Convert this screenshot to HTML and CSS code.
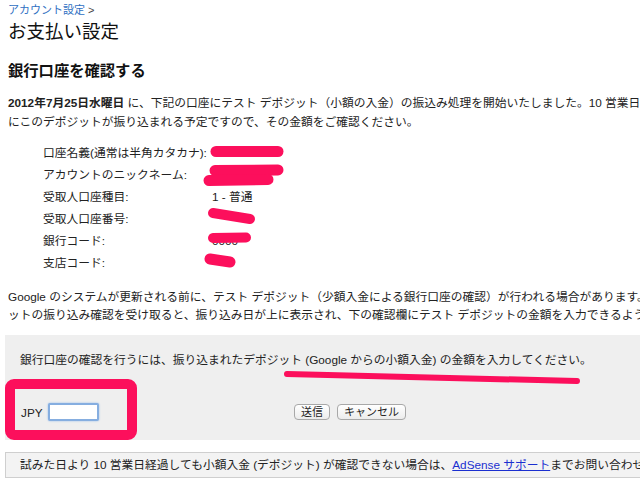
FILE: index.html
```html
<!DOCTYPE html>
<html lang="ja">
<head>
<meta charset="utf-8">
<title>お支払い設定</title>
<link rel="stylesheet" href="styles.css">
</head>
<body>
<div class="page">
  <div class="crumb"><a href="#" class="crumb-link">アカウント設定</a> &gt;</div>
  <h1 class="title">お支払い設定</h1>
  <h2 class="heading">銀行口座を確認する</h2>
  <p class="intro"><b>2012年7月25日水曜日</b> に、下記の口座にテスト デポジット（小額の入金）の振込み処理を開始いたしました。10 営業日以内<br>にこのデポジットが振り込まれる予定ですので、その金額をご確認ください。</p>
  <table class="details">
    <tr><td class="label">口座名義(通常は半角カタカナ):</td><td class="value"></td></tr>
    <tr><td class="label">アカウントのニックネーム:</td><td class="value"></td></tr>
    <tr><td class="label">受取人口座種目:</td><td class="value">1 - 普通</td></tr>
    <tr><td class="label">受取人口座番号:</td><td class="value"></td></tr>
    <tr><td class="label">銀行コード:</td><td class="value">0000</td></tr>
    <tr><td class="label">支店コード:</td><td class="value"></td></tr>
  </table>
  <p class="note">Google のシステムが更新される前に、テスト デポジット（少額入金による銀行口座の確認）が行われる場合があります。テスト デポジ<br>ットの振り込み確認を受け取ると、振り込み日が上に表示され、下の確認欄にテスト デポジットの金額を入力できるようになります。</p>
  <div class="verify">
    <div class="verify-text">銀行口座の確認を行うには、振り込まれたデポジット (Google からの小額入金) の金額を入力してください。</div>
    <div class="verify-row">
      <div class="amount">
        <span class="currency">JPY</span>
        <input class="amount-input" type="text">
      </div>
      <div class="actions">
        <button class="btn">送信</button>
        <button class="btn">キャンセル</button>
      </div>
    </div>
  </div>
  <div class="help">試みた日より 10 営業日経過しても小額入金 (デポジット) が確認できない場合は、<a href="#" class="help-link">AdSense サポート</a>までお問い合わせください。</div>
</div>
<svg class="marks" width="640" height="501" viewBox="0 0 640 501">
  <g stroke="#fc0f5c" stroke-linecap="round" fill="none">
    <line x1="216" y1="151.5" x2="278" y2="151.5" stroke-width="11"/>
    <line x1="215" y1="170.5" x2="278" y2="170" stroke-width="11"/>
    <line x1="209" y1="180.5" x2="268" y2="179.5" stroke-width="11"/>
    <line x1="213" y1="213" x2="250" y2="219" stroke-width="10"/>
    <line x1="213" y1="238" x2="246" y2="237.5" stroke-width="10"/>
    <line x1="210" y1="259" x2="230" y2="262" stroke-width="11"/>
    <line x1="287" y1="374" x2="577" y2="381" stroke-width="6"/>
    <rect x="10" y="384" width="122" height="51" rx="4" stroke-width="10"/>
  </g>
</svg>
</body>
</html>
```

FILE: styles.css
```css
html, body {
  margin: 0;
  padding: 0;
  overflow: hidden;
  background: #fff;
}
body {
  position: relative;
  width: 640px;
  height: 501px;
  font-family: "Liberation Sans", "Noto Sans CJK JP", sans-serif;
  color: #222;
  font-size: 11.75px;
}
.page {
  width: 900px;
  padding: 0 0 0 8px;
}
.crumb {
  height: 20px;
  line-height: 20px;
  font-size: 11px;
  color: #444;
}
.crumb-link {
  color: #2f6fc2;
  text-decoration: none;
}
.title {
  margin: 0;
  font-size: 18.5px;
  font-weight: normal;
  line-height: 24px;
  color: #111;
}
.heading {
  margin: 17px 0 0;
  font-size: 15.3px;
  font-weight: bold;
  line-height: 20px;
  color: #111;
}
.intro {
  margin: 12px 0 0;
  line-height: 19px;
}
.details {
  margin: 11px 0 0 35px;
  border-collapse: collapse;
}
.details td {
  padding: 0;
  height: 22px;
  line-height: 22px;
  vertical-align: middle;
}
.label {
  width: 169px;
}
.value {
  width: 120px;
}
.note {
  margin: 14px 0 0;
  line-height: 18px;
}
.verify {
  margin: 11px 0 0 -3px;
  background: #efefef;
  padding: 15px 0 19px 15px;
}
.verify-text {
  line-height: 20px;
}
.verify-row {
  display: flex;
  align-items: center;
  margin-top: 33px;
  height: 18px;
}
.amount {
  display: flex;
  align-items: center;
  width: 274px;
}
.currency {
  margin-left: 1px;
  margin-right: 5px;
}
.amount-input {
  box-sizing: border-box;
  width: 51px;
  height: 18px;
  margin: 0;
  padding: 0 2px;
  border: 2px solid #86aee0;
  border-radius: 2px;
  box-shadow: 0 0 2px #8fb8ea;
  background: #fff;
}
.actions {
  display: flex;
  gap: 7px;
}
.btn {
  height: 16px;
  margin: 0;
  padding: 0 6px;
  font-family: "Liberation Sans", "Noto Sans CJK JP", sans-serif;
  font-size: 11px;
  line-height: 14px;
  color: #222;
  border: 1px solid #a8a8a8;
  border-radius: 4px;
  background: linear-gradient(#ffffff, #ececec);
}
.help {
  margin: 12px 0 0 -3px;
  height: 24px;
  line-height: 24px;
  padding-left: 14px;
  background: #f3f3f3;
  border: 1px solid #cfcfcf;
  border-right: none;
}
.help-link {
  color: #1b2fd0;
  text-decoration: underline;
}
.marks {
  position: absolute;
  top: 0;
  left: 0;
  pointer-events: none;
}
```
